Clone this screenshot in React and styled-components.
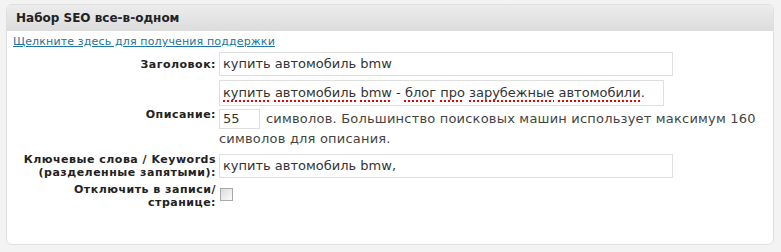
import React from 'react';
import styled, { createGlobalStyle } from 'styled-components';

const GlobalStyle = createGlobalStyle`
    body {
        margin: 0;
        background: #f3f3f3;
        font-family: "DejaVu Sans", Verdana, sans-serif;
        color: #333;
    }
`;

const Page = styled.div`
    padding: 4px 7px 0 6px;
`;

const Panel = styled.div`
    height: 239px;
    background: #fff;
    border: 1px solid #dfdfdf;
    border-radius: 6px;
    overflow: hidden;
`;

const Header = styled.h3`
    margin: 0;
    height: 26px;
    display: flex;
    align-items: center;
    padding-left: 9px;
    font-size: 12px;
    font-weight: bold;
    color: #222;
    background: linear-gradient(to bottom, #ececec, #dcdcdc);
`;

const Body = styled.div`
    padding: 4px 5px 0 6px;
`;

const HelpLink = styled.a`
    display: block;
    font-size: 11px;
    line-height: 14px;
    letter-spacing: 0.15px;
    color: #21759b;
    text-decoration: underline;
    margin-bottom: 3px;
`;

const Form = styled.div`
    display: grid;
    grid-template-columns: 203px 1fr;
    column-gap: 3px;
    row-gap: 4px;
    align-items: center;
`;

const Label = styled.label`
    text-align: right;
    font-size: 11px;
    line-height: 13px;
    letter-spacing: 0.5px;
    font-weight: bold;
    color: #222;
`;

const TextInput = styled.div`
    box-sizing: border-box;
    width: ${({ w }) => w}px;
    height: ${({ h }) => h}px;
    border: 1px solid #dfdfdf;
    background: #fff;
    padding: 0 3px;
    font-size: 13px;
    line-height: ${({ h }) => h - 2}px;
    color: #333;
    white-space: nowrap;
    overflow: hidden;
`;

const Cell = styled.div`
    display: flex;
    flex-direction: column;
    align-items: flex-start;
`;

const Misspelled = styled.span`
    text-decoration: underline dotted #e00;
    text-decoration-thickness: 2px;
    text-underline-offset: 3px;
`;

const CountLine = styled.div`
    margin-top: 3px;
    font-size: 13px;
    line-height: 20px;
    letter-spacing: 0.2px;
    color: #444;
`;

const CountBox = styled.span`
    display: inline-block;
    vertical-align: top;
    box-sizing: border-box;
    width: 41px;
    height: 20px;
    border: 1px solid #dfdfdf;
    padding: 0 3px;
    line-height: 18px;
    letter-spacing: 0;
    color: #333;
    margin-right: 6px;
`;

const Checkbox = styled.input`
    appearance: none;
    margin: 5px 0 0 1px;
    width: 13px;
    height: 13px;
    box-sizing: border-box;
    border: 1px solid #a9a9a9;
    background: linear-gradient(135deg, #dcdcdc, #fbfbfb);
    align-self: start;
`;

const words = [
    ['купить', true], ' ', ['автомобиль', true], ' ', ['bmw', true], ' - ',
    ['блог', true], ' ', ['про', true], ' ', ['зарубежные', true], ' ',
    ['автомобили', true], '.'
];

export default function App() {
    return (
        <>
            <GlobalStyle />
            <Page>
                <Panel>
                    <Header>Набор SEO все-в-одном</Header>
                    <Body>
                        <HelpLink href="#">Щелкните здесь для получения поддержки</HelpLink>
                        <Form>
                            <Label>Заголовок:</Label>
                            <TextInput w={454} h={24}>купить автомобиль bmw</TextInput>

                            <Label>Описание:</Label>
                            <Cell>
                                <TextInput w={445} h={26}>
                                    {words.map((w, i) =>
                                        typeof w === 'string' ? w : <Misspelled key={i}>{w[0]}</Misspelled>
                                    )}
                                </TextInput>
                                <CountLine>
                                    <CountBox>55</CountBox>
                                    символов. Большинство поисковых машин использует максимум 160
                                    <br />
                                    символов для описания.
                                </CountLine>
                            </Cell>

                            <Label>Ключевые слова / Keywords<br />(разделенные запятыми):</Label>
                            <TextInput w={454} h={24}>купить автомобиль bmw,</TextInput>

                            <Label>Отключить в записи/<br />странице:</Label>
                            <Checkbox type="checkbox" />
                        </Form>
                    </Body>
                </Panel>
            </Page>
        </>
    );
}
